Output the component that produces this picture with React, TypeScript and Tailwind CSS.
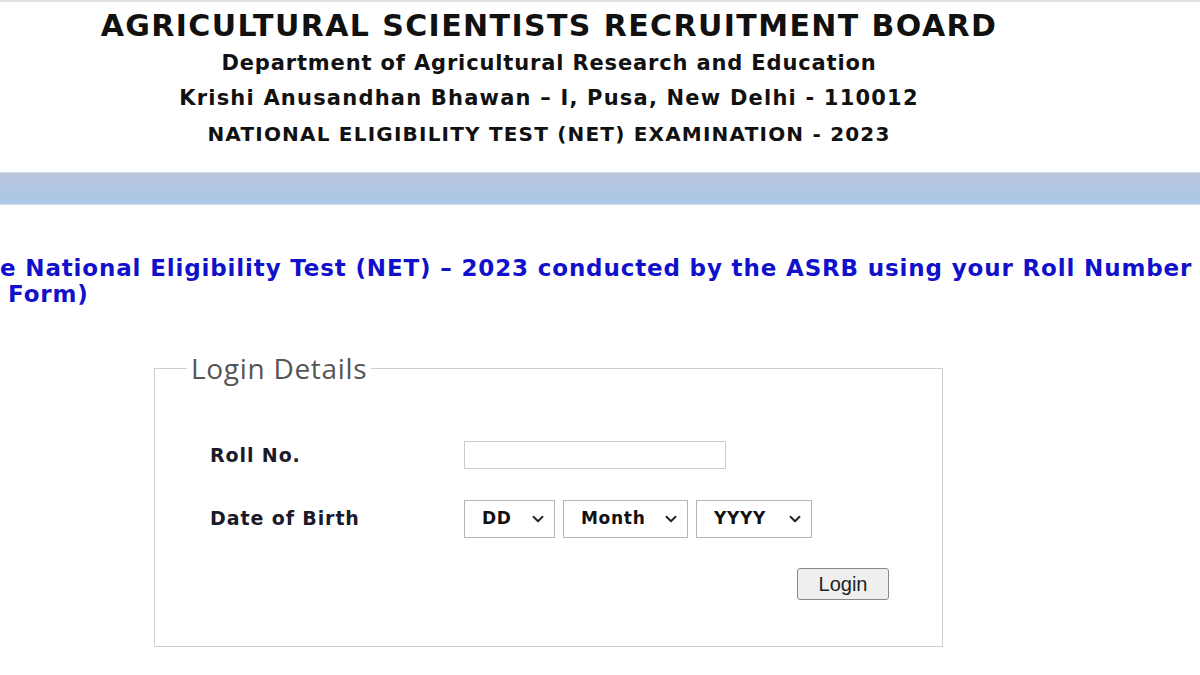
import { ChevronDown } from "lucide-react"

const verdana = "font-['Verdana','DejaVu_Sans',sans-serif]"

interface DropProps {
    label: string
    width: string
}

// native select with a drawn chevron, the page's selects look like windows defaults
const Drop = ({ label, width }: DropProps) => {
    return (
        <div className={`relative h-[38px] ${width}`}>
            <select
                defaultValue={label}
                className={`h-full w-full appearance-none border border-[#b5b5b5] bg-white pl-[17px] text-[17px] font-bold tracking-[0.7px] text-[#111] outline-none ${verdana}`}
            >
                <option>{label}</option>
            </select>
            <ChevronDown
                className="pointer-events-none absolute right-[8px] top-[10px] size-[18px] text-[#222]"
                strokeWidth={2.5}
            />
        </div>
    )
}

export default function App() {
    return (
        <div className={`min-h-[675px] w-[1200px] overflow-hidden bg-white ${verdana}`}>
            {/* header */}
            <header className="border-t-2 border-[#e2e2e2] pt-[6px]">
                <div className="w-[1098px] text-center text-[#111] font-bold">
                    <h1 className="text-[30px] leading-[36px] tracking-[1.4px]">
                        AGRICULTURAL SCIENTISTS RECRUITMENT BOARD
                    </h1>
                    <p className="mt-[2px] text-[21px] leading-[34px] tracking-[0.85px]">
                        Department of Agricultural Research and Education
                    </p>
                    <p className="text-[21px] leading-[36px] tracking-[1.2px]">
                        Krishi Anusandhan Bhawan – I, Pusa, New Delhi - 110012
                    </p>
                    <p className="text-[20px] leading-[36px] tracking-[1.2px]">
                        NATIONAL ELIGIBILITY TEST (NET) EXAMINATION - 2023
                    </p>
                </div>
            </header>

            <div className="mt-[20px] h-[33px] border-y border-[#d5dcea] bg-gradient-to-b from-[#b9c4da] to-[#aac8e8]" />

            {/* notice, only the visible part of the wide line */}
            <div className="mt-[50px] text-[23px] font-bold leading-[26px] tracking-[0.85px] text-[#1111cc]">
                <p className="whitespace-nowrap">
                    e National Eligibility Test (NET) – 2023 conducted by the ASRB using your Roll Number
                </p>
                <p className="pl-[8px]">Form)</p>
            </div>

            {/* login box */}
            <fieldset className="ml-[154px] mt-[47px] h-[293px] w-[789px] border border-[#cfcfcf] pl-[55px] pr-[53px]">
                <legend className="ml-[-23px] px-[4px] font-['Open_Sans',sans-serif] text-[28px] font-medium leading-[28px] tracking-[0.7px] text-[#555]">
                    Login Details
                </legend>

                <div className="mt-[59px] flex items-center">
                    <label className="w-[254px] text-[19px] font-bold tracking-[0.9px] text-[#1a1a2a]">Roll No.</label>
                    <input
                        type="text"
                        className="h-[28px] w-[262px] border border-[#cccccc] bg-white outline-none"
                    />
                </div>

                <div className="mt-[30px] flex items-center">
                    <label className="w-[254px] text-[19px] font-bold tracking-[0.9px] text-[#1a1a2a]">Date of Birth</label>
                    <div className="flex gap-[8px]">
                        <Drop label="DD" width="w-[91px]" />
                        <Drop label="Month" width="w-[125px]" />
                        <Drop label="YYYY" width="w-[116px]" />
                    </div>
                </div>

                <div className="mt-[30px] flex justify-end">
                    <button className="h-[32px] w-[92px] rounded-[3px] border border-[#8a8a8a] bg-[#efefef] font-['Liberation_Sans',Arial,sans-serif] text-[20px] text-[#222]">
                        Login
                    </button>
                </div>
            </fieldset>
        </div>
    )
}
